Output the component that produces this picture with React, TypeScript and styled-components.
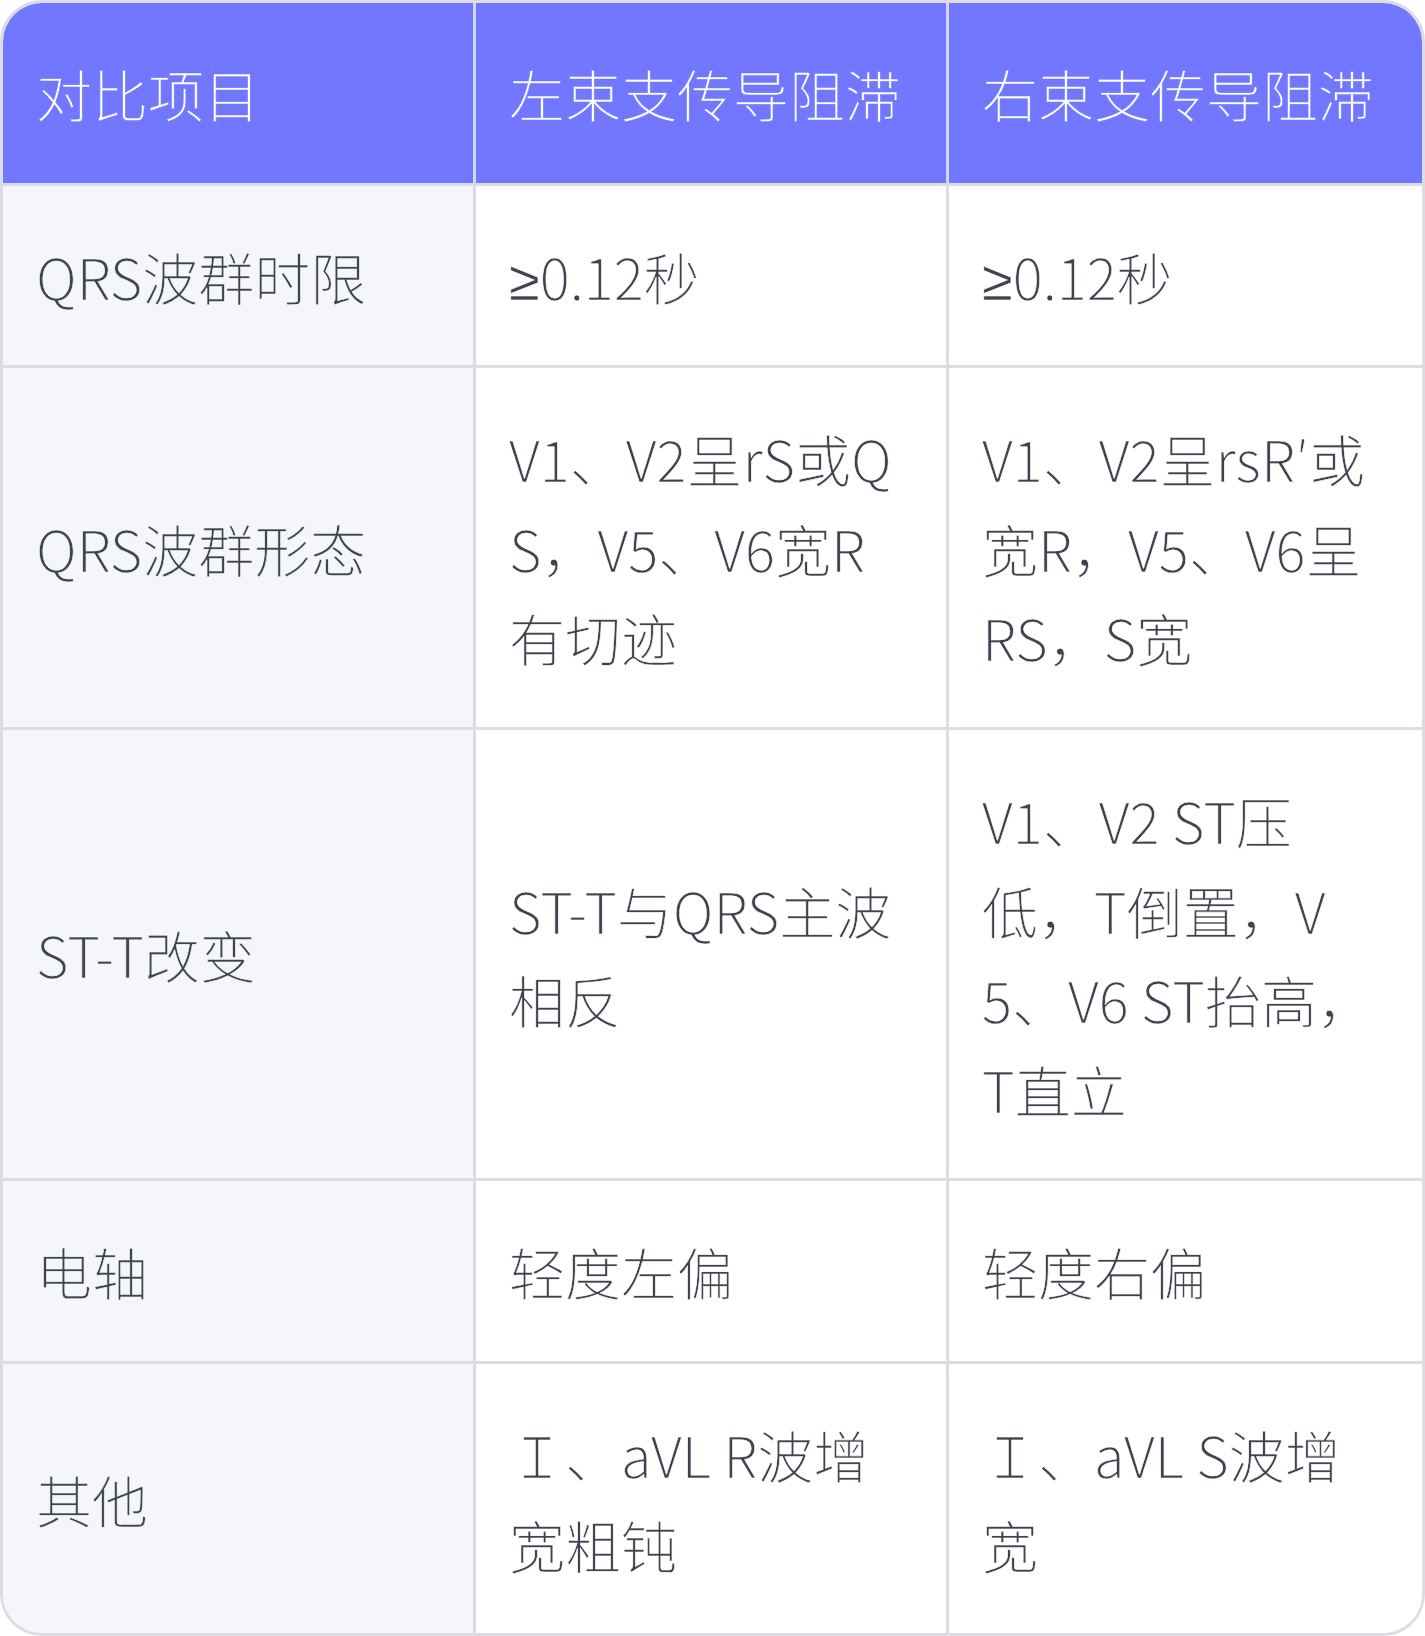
import { createGlobalStyle, styled } from 'styled-components'

const GlobalStyle = createGlobalStyle`
  html, body {
    margin: 0;
    padding: 0;
    background: #ffffff;
  }
`

const Frame = styled.div`
  width: 1425px;
  box-sizing: border-box;
  border: 3px solid #dcdde3;
  border-radius: 42px;
  overflow: hidden;
  font-family: "Noto Sans CJK SC", "Noto Sans", sans-serif;
  font-weight: 300;
  font-size: 56px;
  line-height: 1.6;
`

const Table = styled.table`
  width: 100%;
  border-collapse: separate;
  border-spacing: 0;
  table-layout: fixed;
`

const HeadCell = styled.th`
  background-color: #7177ff;
  color: #ffffff;
  font-weight: 300;
  text-align: left;
  padding: 45px 33px;
  border-right: 3px solid #d4d6f0;
  border-bottom: 3px solid #dcdde3;
  /* only a regular cut is installed: thin the strokes a little toward light */
  -webkit-text-stroke: 0.6px #7177ff;

  &:last-child {
    border-right: none;
  }
`

const Cell = styled.td<{ $label?: boolean }>`
  background-color: ${(p) => (p.$label ? '#f4f6fa' : '#ffffff')};
  color: #3f4350;
  text-align: left;
  vertical-align: middle;
  padding: 45px 33px;
  border-right: 3px solid #dcdde3;
  border-bottom: 3px solid #dcdde3;
  word-break: break-all;
  -webkit-text-stroke: 0.6px ${(p) => (p.$label ? '#f4f6fa' : '#ffffff')};

  &:last-child {
    border-right: none;
  }

  tr:last-child > & {
    border-bottom: none;
  }
`

// narrow latin "≥" instead of the full-width CJK one
const Sign = styled.span`
  font-family: "Noto Sans", "DejaVu Sans", sans-serif;
  line-height: 0;
`

const rows = [
  ['QRS波群时限', <><Sign>≥</Sign>0.12秒</>, <><Sign>≥</Sign>0.12秒</>],
  ['QRS波群形态', 'V1、V2呈rS或QS，V5、V6宽R有切迹', 'V1、V2呈rsR′或宽R，V5、V6呈RS，S宽'],
  ['ST-T改变', 'ST-T与QRS主波相反', 'V1、V2 ST压低，T倒置，V5、V6 ST抬高，T直立'],
  ['电轴', '轻度左偏', '轻度右偏'],
  ['其他', 'Ｉ、aVL R波增宽粗钝', 'Ｉ、aVL S波增宽'],
]

const App = () => {
  return (
    <>
      <GlobalStyle />
      <Frame>
        <Table>
          <thead>
            <tr>
              <HeadCell>对比项目</HeadCell>
              <HeadCell>左束支传导阻滞</HeadCell>
              <HeadCell>右束支传导阻滞</HeadCell>
            </tr>
          </thead>
          <tbody>
            {rows.map((row, i) => (
              <tr key={i}>
                <Cell $label>{row[0]}</Cell>
                <Cell>{row[1]}</Cell>
                <Cell>{row[2]}</Cell>
              </tr>
            ))}
          </tbody>
        </Table>
      </Frame>
    </>
  )
}

export default App
